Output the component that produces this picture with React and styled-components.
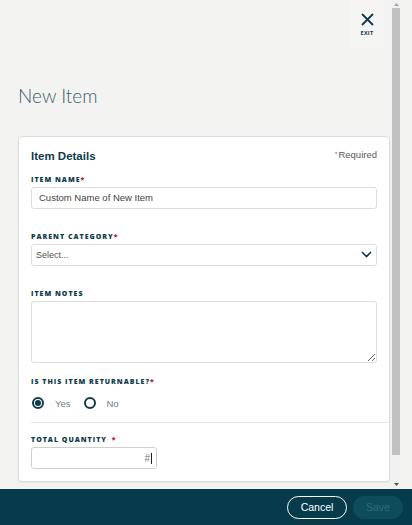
import { createGlobalStyle } from "styled-components";
import styled from "styled-components";

const GlobalStyle = createGlobalStyle`
  html, body {
    margin: 0;
    padding: 0;
  }
  body {
    font-family: "Liberation Sans", Arial, sans-serif;
    background: #f3f3f1;
  }
  * {
    box-sizing: border-box;
  }
`;

const Page = styled.div`
  display: flex;
  flex-direction: column;
  width: 412px;
  height: 525px;
  background: #f3f3f1;
  overflow: hidden;
`;

const Body = styled.div`
  display: flex;
  flex: 1;
  min-height: 0;
  padding-right: 12px;
`;

const Scroller = styled.div`
  flex: 1;
  overflow: hidden;
  padding: 0 2px 0 18px;
`;

const TopBar = styled.div`
  display: flex;
  justify-content: flex-end;
`;

const ExitButton = styled.button`
  display: flex;
  flex-direction: column;
  align-items: center;
  width: 34px;
  height: 48px;
  margin-right: 6px;
  padding: 13px 0 0;
  border: none;
  background: #f5f5f3;
  color: #0d3b4a;
  cursor: pointer;
`;

const ExitText = styled.span`
  margin-top: 4px;
  font-family: "Open Sans", sans-serif;
  font-size: 5.5px;
  font-weight: 700;
  letter-spacing: 0.3px;
  line-height: 7px;
`;

const Title = styled.h1`
  margin: 37px 0 29px;
  font-family: Lato, "Liberation Sans", sans-serif;
  font-size: 19px;
  line-height: 22px;
  font-weight: 300;
  color: #3f5f6a;
`;

const Card = styled.div`
  background: #fff;
  border: 1px solid #dcdcdc;
  border-radius: 4px;
  padding: 12px;
  box-shadow: 0 1px 2px rgba(0, 0, 0, 0.06);
`;

const CardHeader = styled.div`
  display: flex;
  justify-content: space-between;
  align-items: flex-start;
  height: 14px;
`;

const CardTitle = styled.h2`
  margin: 0;
  font-size: 11.5px;
  line-height: 14px;
  font-weight: 700;
  color: #0d3b4a;
`;

const RequiredNote = styled.span`
  font-size: 9.5px;
  line-height: 11px;
  color: #5a5a5a;
`;

const Star = styled.span`
  color: #c8102e;
  font-size: ${(props) => (props.small ? "6px" : "7px")};
  vertical-align: top;
  margin-left: ${(props) => (props.gap ? "2px" : "0")};
  margin-right: ${(props) => (props.small ? "1px" : "0")};
`;

const Field = styled.div`
  margin-top: ${(props) => props.top}px;
`;

const Label = styled.label`
  display: block;
  margin-bottom: 2px;
  font-family: "Open Sans", sans-serif;
  font-size: 7px;
  line-height: 10px;
  font-weight: 800;
  letter-spacing: 1px;
  color: #0d3b4a;
  text-transform: uppercase;
`;

const TextInput = styled.input`
  display: block;
  width: 100%;
  height: 22px;
  padding: 0 7px;
  border: 1px solid #dcdcdc;
  border-radius: 3px;
  font-family: "Liberation Sans", Arial, sans-serif;
  font-size: 9.5px;
  color: #444;
  outline: none;
`;

const SelectBox = styled.div`
  display: flex;
  align-items: center;
  justify-content: space-between;
  height: 22px;
  padding: 0 4px;
  border: 1px solid #dcdcdc;
  border-radius: 3px;
  font-size: 9px;
  color: #555;
`;

const TextArea = styled.textarea`
  display: block;
  width: 100%;
  height: 62px;
  border: 1px solid #dcdcdc;
  border-radius: 3px;
  resize: vertical;
  outline: none;
`;

const RadioRow = styled.div`
  display: flex;
  align-items: center;
  height: 14px;
  margin-top: 9px;
  padding-left: 1px;
`;

const RadioOption = styled.label`
  display: flex;
  align-items: center;
  margin-right: ${(props) => (props.last ? "0" : "13px")};
  font-size: 9.5px;
  color: #6e7f86;
`;

const RadioCircle = styled.span`
  display: flex;
  align-items: center;
  justify-content: center;
  width: 12px;
  height: 12px;
  margin-right: 11px;
  border: 2px solid #0d3b4a;
  border-radius: 50%;

  &::after {
    content: "";
    display: ${(props) => (props.checked ? "block" : "none")};
    width: 6px;
    height: 6px;
    border-radius: 50%;
    background: #0d3b4a;
  }
`;

const Divider = styled.hr`
  margin: 12px -12px 0 0;
  border: none;
  border-top: 1px solid #e6e6e6;
`;

const QuantityBox = styled.div`
  display: flex;
  align-items: center;
  justify-content: flex-end;
  width: 126px;
  height: 22px;
  padding-right: 4px;
  border: 1px solid #cfcfcf;
  border-radius: 3px;
  font-size: 10px;
  color: #777;
`;

const Caret = styled.span`
  width: 1px;
  height: 11px;
  margin-left: 1px;
  background: #222;
`;

const ScrollBar = styled.div`
  display: flex;
  flex-direction: column;
  width: 8px;
  background: #f1f1f1;
`;

const ScrollArrow = styled.div`
  display: flex;
  align-items: center;
  justify-content: center;
  height: ${(props) => props.h}px;
`;

const ScrollTrack = styled.div`
  flex: 1;
`;

const ScrollThumb = styled.div`
  height: 447px;
  background: #c1c1c1;
`;

const Footer = styled.footer`
  display: flex;
  align-items: center;
  justify-content: flex-end;
  gap: 6px;
  height: 36px;
  padding-right: 9px;
  background: #063b4c;
`;

const FooterButton = styled.button`
  height: 23px;
  width: ${(props) => (props.primary ? "50px" : "60px")};
  border: 1px solid ${(props) => (props.primary ? "transparent" : "#fff")};
  border-radius: 12px;
  background: ${(props) => (props.primary ? "#0d4d5a" : "transparent")};
  color: ${(props) => (props.primary ? "#2f6a76" : "#fff")};
  font-family: "Liberation Sans", Arial, sans-serif;
  font-size: 10.5px;
  cursor: pointer;
`;

const CloseIcon = () => (
  <svg width="13" height="13" viewBox="0 0 13 13">
    <path d="M1 1 L12 12 M12 1 L1 12" stroke="#0d3b4a" strokeWidth="1.8" />
  </svg>
);

const Chevron = () => (
  <svg width="11" height="7" viewBox="0 0 11 7">
    <path d="M1 1 L5.5 5.5 L10 1" stroke="#0d3b4a" strokeWidth="1.6" fill="none" />
  </svg>
);

const Triangle = ({ down }) => (
  <svg width="5" height="3" viewBox="0 0 5 3">
    <path d={down ? "M0 0 L5 0 L2.5 3 Z" : "M0 3 L5 3 L2.5 0 Z"} fill={down ? "#505050" : "#a3a3a3"} />
  </svg>
);

export default function App() {
  return (
    <>
      <GlobalStyle />
      <Page>
        <Body>
          <Scroller>
            <TopBar>
              <ExitButton>
                <CloseIcon />
                <ExitText>EXIT</ExitText>
              </ExitButton>
            </TopBar>
            <Title>New Item</Title>
            <Card>
              <CardHeader>
                <CardTitle>Item Details</CardTitle>
                <RequiredNote>
                  <Star small>*</Star>Required
                </RequiredNote>
              </CardHeader>

              <Field top={11.5}>
                <Label>Item Name<Star>*</Star></Label>
                <TextInput defaultValue="Custom Name of New Item" />
              </Field>

              <Field top={23}>
                <Label>Parent Category<Star>*</Star></Label>
                <SelectBox>
                  <span>Select...</span>
                  <Chevron />
                </SelectBox>
              </Field>

              <Field top={23}>
                <Label>Item Notes</Label>
                <TextArea />
              </Field>

              <Field top={14.5}>
                <Label>Is this item returnable?<Star>*</Star></Label>
                <RadioRow>
                  <RadioOption>
                    <RadioCircle checked />
                    Yes
                  </RadioOption>
                  <RadioOption last>
                    <RadioCircle />
                    No
                  </RadioOption>
                </RadioRow>
              </Field>

              <Divider />

              <Field top={12}>
                <Label>Total Quantity <Star gap>*</Star></Label>
                <QuantityBox>
                  #<Caret />
                </QuantityBox>
              </Field>
            </Card>
          </Scroller>
          <ScrollBar>
            <ScrollArrow h={8}>
              <Triangle />
            </ScrollArrow>
            <ScrollTrack>
              <ScrollThumb />
            </ScrollTrack>
            <ScrollArrow h={10}>
              <Triangle down />
            </ScrollArrow>
          </ScrollBar>
        </Body>
        <Footer>
          <FooterButton>Cancel</FooterButton>
          <FooterButton primary>Save</FooterButton>
        </Footer>
      </Page>
    </>
  );
}
